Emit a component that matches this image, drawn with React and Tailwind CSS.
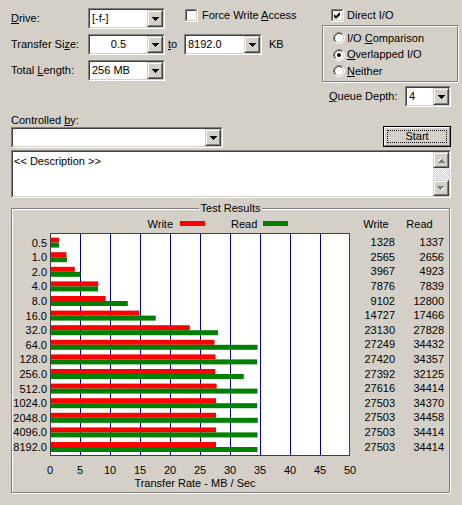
import React from 'react';

const rows = [
    { size: '0.5', write: 1328, read: 1337 },
    { size: '1.0', write: 2565, read: 2656 },
    { size: '2.0', write: 3967, read: 4923 },
    { size: '4.0', write: 7876, read: 7839 },
    { size: '8.0', write: 9102, read: 12800 },
    { size: '16.0', write: 14727, read: 17466 },
    { size: '32.0', write: 23130, read: 27828 },
    { size: '64.0', write: 27249, read: 34432 },
    { size: '128.0', write: 27420, read: 34357 },
    { size: '256.0', write: 27392, read: 32125 },
    { size: '512.0', write: 27616, read: 34414 },
    { size: '1024.0', write: 27503, read: 34370 },
    { size: '2048.0', write: 27503, read: 34458 },
    { size: '4096.0', write: 27503, read: 34414 },
    { size: '8192.0', write: 27503, read: 34414 },
];

// chart geometry (page coordinates, see viewBox)
const X0 = 51;
const PX_PER_MB = 6;
const ROW_TOP = 237.6;
const PITCH = 14.6;

function Sunken({ className = '', children }) {
    return (
        <div className={`border border-t-[#808080] border-l-[#808080] border-b-white border-r-white ${className}`}>
            <div className="flex h-full w-full border border-t-[#404040] border-l-[#404040] border-b-[#d4d0c8] border-r-[#d4d0c8] bg-white">
                {children}
            </div>
        </div>
    );
}

function Raised({ className = '', children }) {
    return (
        <div className={`border border-t-[#d4d0c8] border-l-[#d4d0c8] border-b-[#404040] border-r-[#404040] ${className}`}>
            <div className="flex h-full w-full items-center justify-center border border-t-white border-l-white border-b-[#808080] border-r-[#808080] bg-[#d4d0c8]">
                {children}
            </div>
        </div>
    );
}

const ARROW = 'M0 0h7v1h-1v1h-1v1h-1v1h-1v-1h-1v-1h-1v-1h-1z';

function Combo({ w, value, center }) {
    return (
        <Sunken className={`${w} h-[21px] shrink-0`}>
            <div className={`flex flex-1 items-center px-[2px] ${center ? 'justify-center' : ''}`}>{value}</div>
            <Raised className="h-full w-[16px]">
                <svg width="7" height="4" viewBox="0 0 7 4">
                    <path d={ARROW} fill="#000" />
                </svg>
            </Raised>
        </Sunken>
    );
}

function Checkbox({ checked }) {
    return (
        <svg width="13" height="13" viewBox="0 0 13 13" className="shrink-0">
            <rect x="2" y="2" width="9" height="9" fill="#fff" />
            <path d="M0.5 12 V0.5 H12" stroke="#808080" fill="none" />
            <path d="M1.5 11 V1.5 H11" stroke="#404040" fill="none" />
            <path d="M0 12.5 H12.5 V0" stroke="#fff" fill="none" />
            <path d="M1 11.5 H11.5 V1" stroke="#d4d0c8" fill="none" />
            {checked && <path d="M3 5 L5 7 L9 3 L9 6 L5 10 L3 8 Z" fill="#000" />}
        </svg>
    );
}

function Radio({ checked }) {
    return (
        <svg width="12" height="12" viewBox="0 0 12 12" className="shrink-0">
            <circle cx="6" cy="6" r="5" fill="#fff" />
            <path d="M2.11 9.89 A5.5 5.5 0 0 1 9.89 2.11" stroke="#808080" fill="none" />
            <path d="M9.89 2.11 A5.5 5.5 0 0 1 2.11 9.89" stroke="#fff" fill="none" />
            <path d="M2.82 9.18 A4.5 4.5 0 0 1 9.18 2.82" stroke="#404040" fill="none" />
            <path d="M9.18 2.82 A4.5 4.5 0 0 1 2.82 9.18" stroke="#d4d0c8" fill="none" />
            {checked && <circle cx="6" cy="6" r="2" fill="#000" />}
        </svg>
    );
}

function ScrollArrow({ up }) {
    return (
        <Raised className="h-[16px] w-[16px]">
            <svg width="8" height="5" viewBox="0 0 8 5" className={up ? 'rotate-180' : ''}>
                <path d={ARROW} fill="#fff" transform="translate(1 1)" />
                <path d={ARROW} fill="#808080" />
            </svg>
        </Raised>
    );
}

function Chart() {
    return (
        <svg width="345" height="283" viewBox="12 209 345 283" className="shrink-0">
            {/* legend */}
            <text x="173" y="228" textAnchor="end">Write</text>
            <rect x="180" y="221" width="25" height="5" fill="#ff0000" />
            <text x="231" y="228">Read</text>
            <rect x="263" y="221" width="25" height="5" fill="#008000" />

            {/* plot area */}
            <rect x="50.5" y="233.5" width="299" height="222" fill="#fff" stroke="#404040" />
            {[1, 2, 3, 4, 5, 6, 7, 8, 9].map((k) => (
                <line key={k} x1={50.5 + k * 30} x2={50.5 + k * 30} y1="234" y2="455" stroke="#0000a0" />
            ))}
            {rows.map((r, i) => (
                <g key={r.size}>
                    <rect x={X0} y={ROW_TOP + i * PITCH} width={(r.write / 1000) * PX_PER_MB} height="5" fill="#ff0000" />
                    <rect x={X0} y={ROW_TOP + i * PITCH + 5} width={(r.read / 1000) * PX_PER_MB} height="5" fill="#008000" />
                    <text x="47" y={ROW_TOP + i * PITCH + 9} textAnchor="end">{r.size}</text>
                </g>
            ))}

            {/* x axis */}
            {[0, 5, 10, 15, 20, 25, 30, 35, 40, 45, 50].map((v, k) => (
                <text key={v} x={50 + k * 30} y="474" textAnchor="middle">{v}</text>
            ))}
            <text x="195" y="487" textAnchor="middle">Transfer Rate - MB / Sec</text>
        </svg>
    );
}

export default function App() {
    return (
        <div className="h-[505px] w-[462px] overflow-hidden bg-[#d4d0c8] px-[11px] font-['Liberation_Sans',Arial,sans-serif] text-[11px] leading-[13px] text-black">
            {/* top settings */}
            <div className="flex">
                <div className="w-[311px] shrink-0">
                    <div className="mt-[8px] flex h-[21px] items-center">
                        <span className="w-[77px]"><u>D</u>rive:</span>
                        <Combo w="w-[77px]" value="[-f-]" />
                        <div className="ml-[20px] mt-[1px] flex items-center gap-[4px] self-start">
                            <Checkbox />
                            <span>Force Write <u>A</u>ccess</span>
                        </div>
                    </div>
                    <div className="mt-[5px] flex h-[21px] items-center">
                        <span className="w-[77px]">Transfer Si<u>z</u>e:</span>
                        <Combo w="w-[77px]" value="0.5" center />
                        <span className="ml-[3px] w-[16px]"><u>t</u>o</span>
                        <Combo w="w-[78px]" value="8192.0" />
                        <span className="ml-[7px]">KB</span>
                    </div>
                    <div className="mt-[5px] flex h-[21px] items-center">
                        <span className="w-[77px]">Total <u>L</u>ength:</span>
                        <Combo w="w-[77px]" value="256 MB" />
                    </div>
                </div>

                <div className="w-[137px] shrink-0">
                    <div className="ml-[9px] mt-[9px] flex items-center gap-[3px]">
                        <Checkbox checked />
                        <span>Direct I/O</span>
                    </div>
                    <div className="mt-[3px] h-[57px] w-[136px] border border-[#808080] pl-[10px] pt-[4px] shadow-[inset_1px_1px_0_#fff,1px_1px_0_#fff]">
                        <div className="flex h-[16.5px] items-center gap-[2px]">
                            <Radio />
                            <span>I/O <u>C</u>omparison</span>
                        </div>
                        <div className="flex h-[16.5px] items-center gap-[2px]">
                            <Radio checked />
                            <span><u>O</u>verlapped I/O</span>
                        </div>
                        <div className="flex h-[16.5px] items-center gap-[2px]">
                            <Radio />
                            <span><u>N</u>either</span>
                        </div>
                    </div>
                    <div className="mt-[4px] flex h-[21px] items-center">
                        <span className="ml-[7px] w-[76px]"><u>Q</u>ueue Depth:</span>
                        <Combo w="w-[46px]" value="4" />
                    </div>
                </div>
            </div>

            {/* controlled by + start */}
            <div className="mt-[6px] h-[14px] leading-[14px]">Controlled <u>b</u>y:</div>
            <div className="flex items-start justify-between">
                <Combo w="w-[212px]" value="" />
                <div className="-mt-[1px] h-[21px] w-[68px] border border-black">
                    <div className="h-full border border-t-white border-l-white border-b-[#808080] border-r-[#808080] p-[2px]">
                        <div className="flex h-full items-center justify-center border border-dotted border-black">Start</div>
                    </div>
                </div>
            </div>

            {/* description */}
            <Sunken className="mt-[2px] h-[48px] w-full">
                <div className="flex-1 pl-[1px] pt-[3px]">{'<< Description >>'}</div>
                <div className="flex w-[16px] flex-col">
                    <ScrollArrow up />
                    <div className="flex-1 bg-[repeating-conic-gradient(#fff_0_25%,#d4d0c8_0_50%)] bg-[length:2px_2px]" />
                    <ScrollArrow />
                </div>
            </Sunken>

            {/* test results */}
            <div className="relative mt-[10px] h-[285px] w-[439px] border border-[#808080] shadow-[inset_1px_1px_0_#fff,1px_1px_0_#fff]">
                <span className="absolute -top-[8px] left-1/2 -translate-x-1/2 bg-[#d4d0c8] px-[2px] leading-[14px]">Test Results</span>
                <div className="flex">
                    <Chart />
                    <div className="flex">
                        <div className="w-[38px]">
                            <div className="mt-[8px] h-[14px] text-center leading-[14px]">Write</div>
                            <div className="mt-[4.3px]">
                                {rows.map((r) => (
                                    <div key={r.size} className="h-[14.6px] text-right leading-[14.6px]">{r.write}</div>
                                ))}
                            </div>
                        </div>
                        <div className="w-[49px]">
                            <div className="mt-[8px] h-[14px] text-center leading-[14px]">Read</div>
                            <div className="mt-[4.3px]">
                                {rows.map((r) => (
                                    <div key={r.size} className="h-[14.6px] text-right leading-[14.6px]">{r.read}</div>
                                ))}
                            </div>
                        </div>
                    </div>
                </div>
            </div>
        </div>
    );
}
